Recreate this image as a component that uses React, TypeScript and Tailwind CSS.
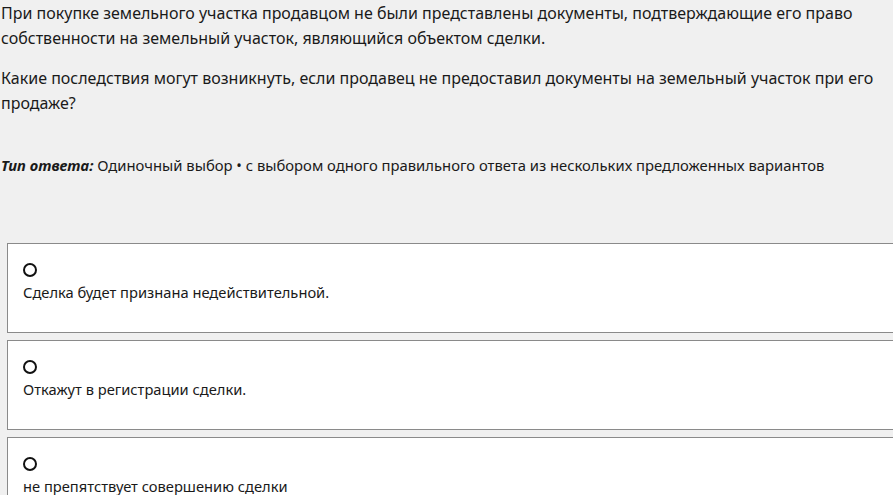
import React from "react";

const options = [
  "Сделка будет признана недействительной.",
  "Откажут в регистрации сделки.",
  "не препятствует совершению сделки",
];

export default function App() {
  return (
    <div
      className="w-[893px] h-[495px] overflow-hidden bg-[#f0f0f0] text-[#1a1a1a]"
      style={{ fontFamily: '"Noto Sans", "Open Sans", sans-serif' }}
    >
      <div className="pt-[1px]">
        <p className="text-[16px] leading-[25px] pl-[1px]">
          При покупке земельного участка продавцом не были представлены документы, подтверждающие его право
          собственности на земельный участок, являющийся объектом сделки.
        </p>
        <p className="mt-[15px] text-[16px] leading-[25px] pl-[1px]">
          Какие последствия могут возникнуть, если продавец не предоставил документы на земельный участок при его
          продаже?
        </p>
        <p className="mt-[39px] text-[14.8px] leading-[20px] pl-[1px]">
          <span className="font-bold italic">Тип ответа:</span> Одиночный выбор • с выбором одного правильного
          ответа из нескольких предложенных вариантов
        </p>
      </div>
      <div className="mt-[68px] ml-[7px] flex flex-col gap-[7px]">
        {options.map((o) => (
          <div key={o} className="h-[90px] border border-[#8a8a8a] bg-white pl-[15px] pt-[19px] w-[900px]">
            <div className="w-[14px] h-[14px] rounded-full border-[2.5px] border-[#111]" />
            <div className="mt-[5px] text-[14.7px] leading-[20px]">{o}</div>
          </div>
        ))}
      </div>
    </div>
  );
}
